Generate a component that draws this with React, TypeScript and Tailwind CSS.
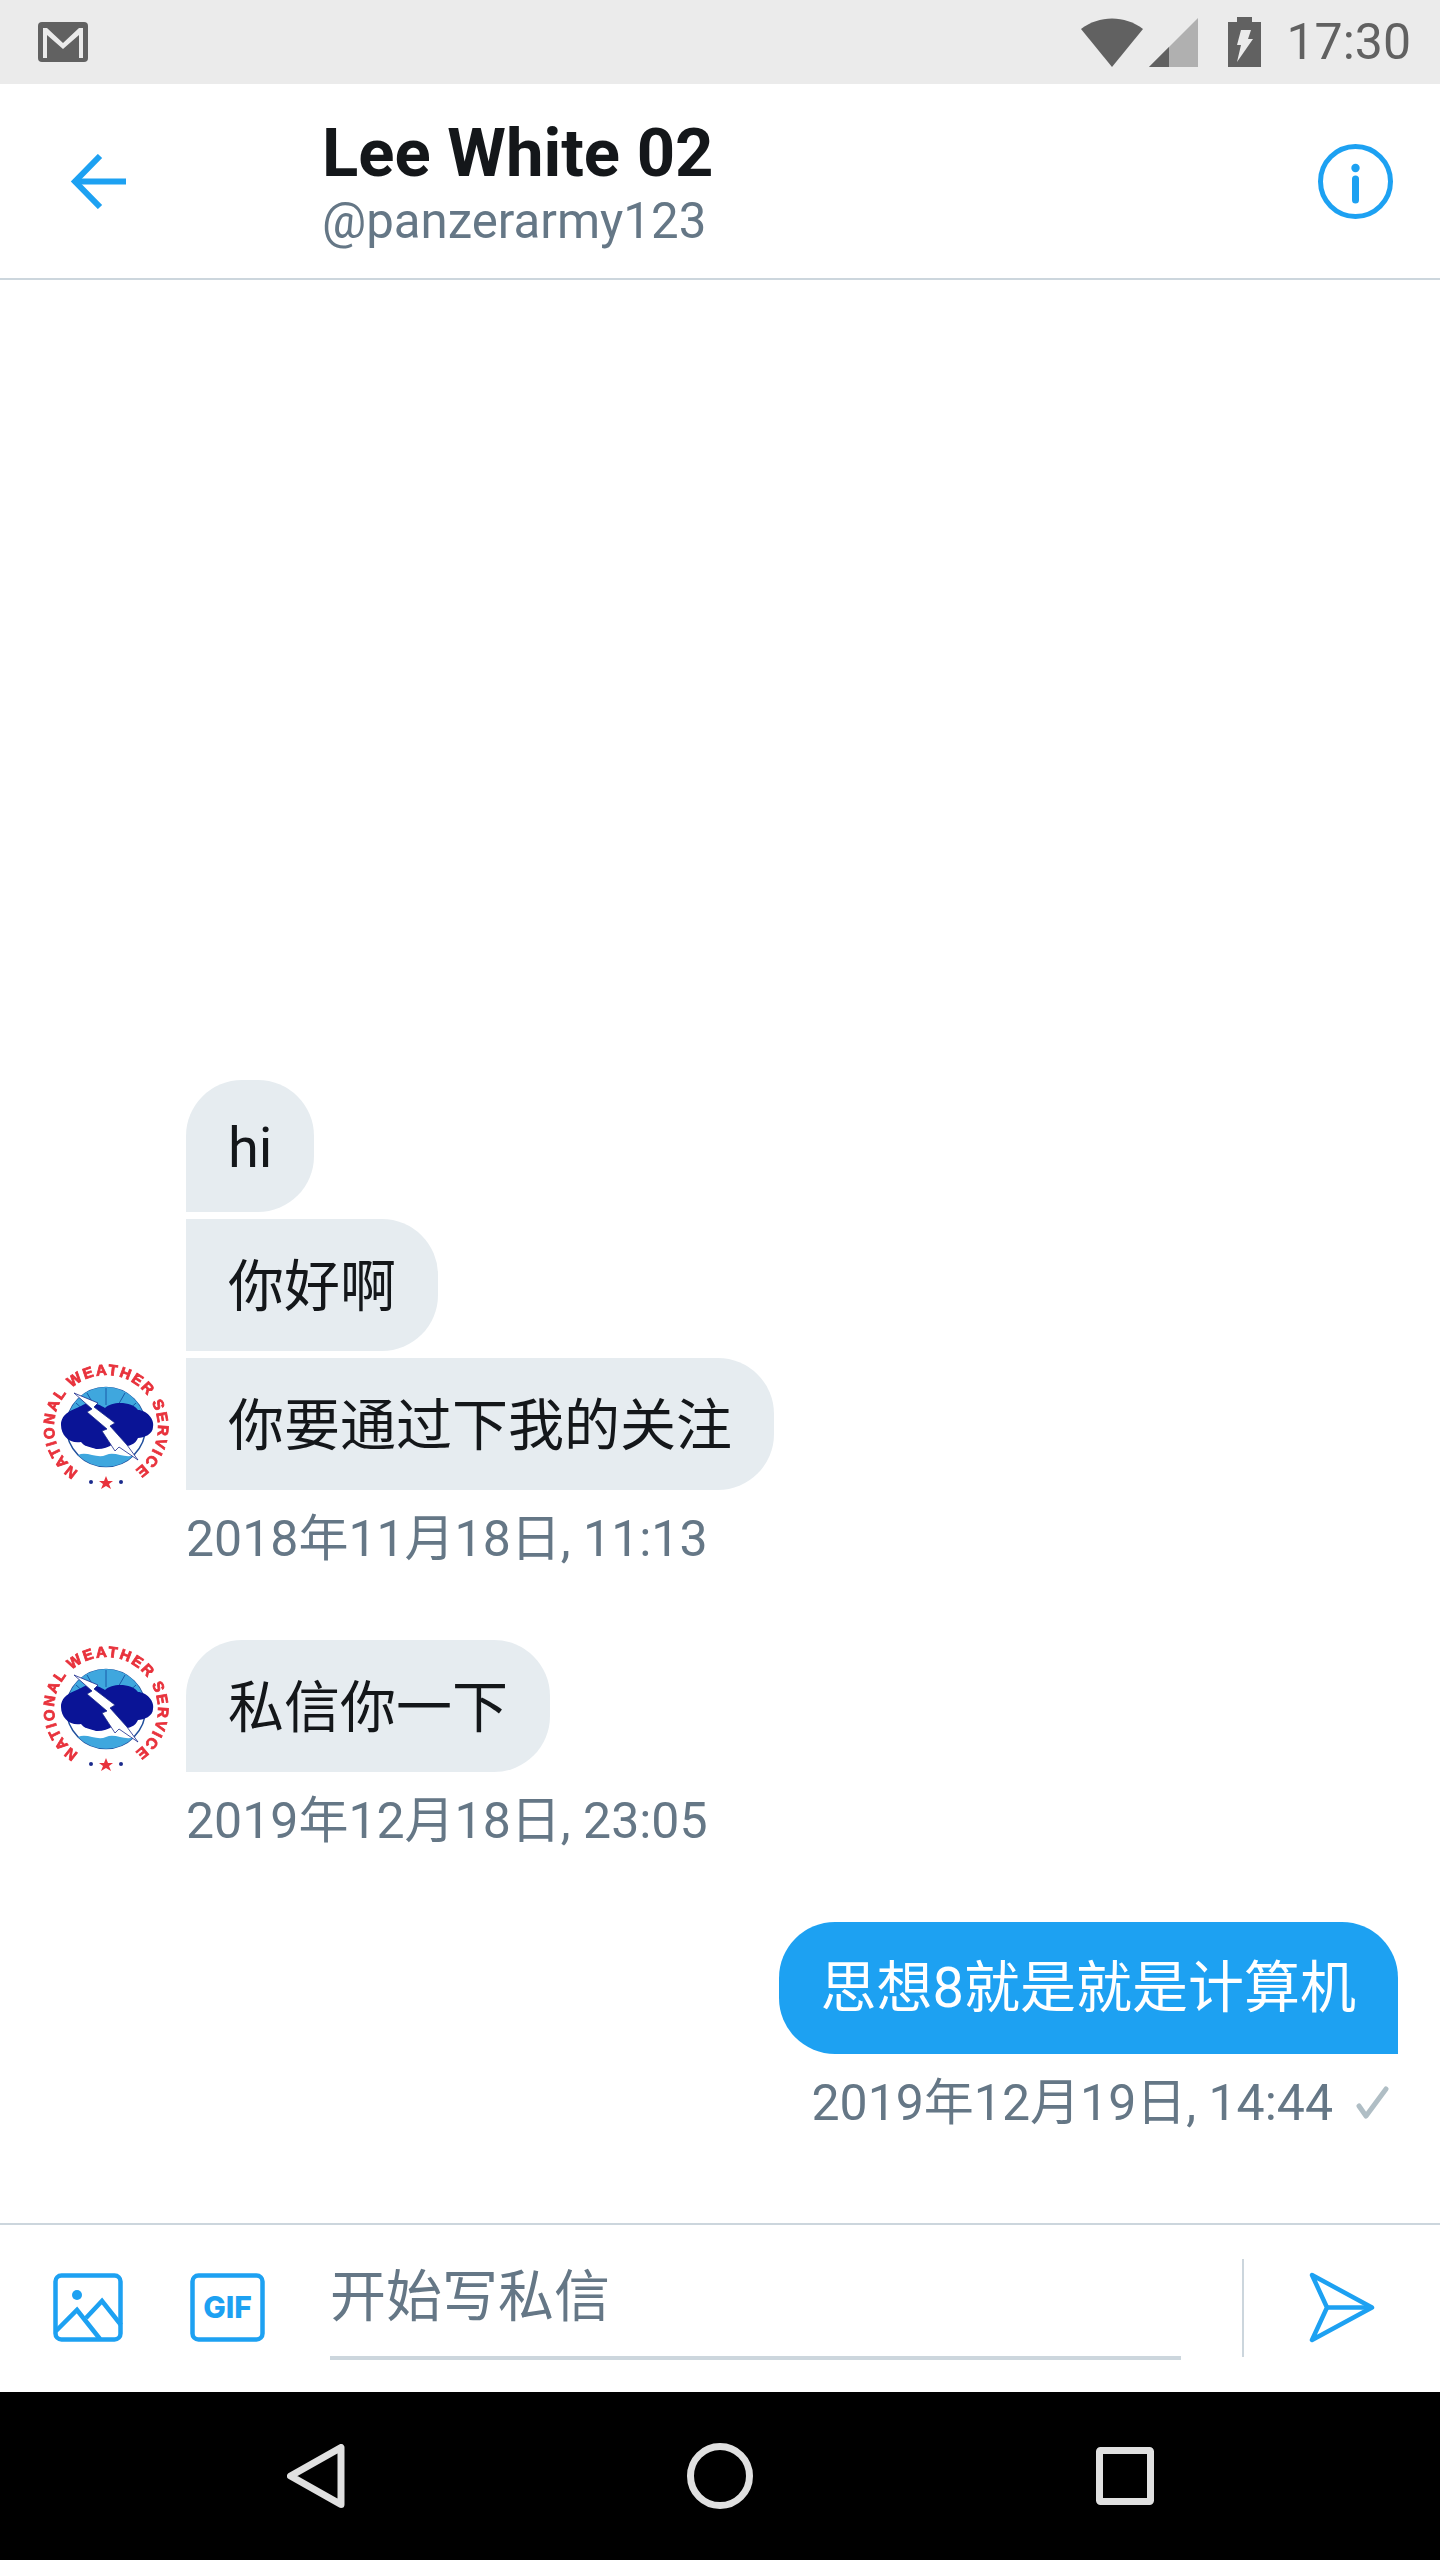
function Avatar() {
  return (
    <svg viewBox="0 0 126 126" className="h-[126px] w-[126px] shrink-0 overflow-visible blur-[0.6px]">
      <path id="wxArc" d="M35.4 108.1 A52 52 0 1 1 90.6 108.1" fill="none" />
      <text fontFamily="Liberation Sans" fontWeight="700" fontSize="15" fill="#e8323c" stroke="#e8323c" strokeWidth="0.8">
        <textPath href="#wxArc" textLength="266" lengthAdjust="spacing">NATIONAL WEATHER SERVICE</textPath>
      </text>
      <circle cx="63" cy="64" r="39.5" fill="#ffffff" stroke="#1f4e9c" strokeWidth="1.5" />
      <path d="M27 48 A39 39 0 0 1 99 48 L90 58 H36 Z" fill="#3fa7de" />
      <path d="M63 25 V42 M44 30 L52 44 M82 30 L74 44 M33 40 L44 50 M93 40 L82 50" stroke="#1a5aa8" strokeWidth="1" />
      <path d="M18 62 C18 50 30 47 38 43 C46 37 56 41 62 45 C70 37 90 39 95 47 C103 47 112 56 110 64 C110 71 101 75 95 75 C91 85 76 85 70 81 C60 89 44 87 38 79 C27 81 18 73 18 62 Z" fill="#0a1496" />
      <path d="M32 84 C42 78 52 90 63 86 C74 82 84 90 94 84 A39 39 0 0 1 32 84 Z" fill="#ffffff" />
      <path d="M35 92 C44 88 54 96 63 92 C72 88 82 96 91 92 A39 39 0 0 1 35 92 Z" fill="#3fa7de" />
      <path d="M31 30 L55 40 L51 44 L72 60 L67 63 L84 82 L95 97 L76 84 L72 88 L59 68 L64 66 L44 49 L49 46 Z" fill="#ffffff" stroke="#1a2a8c" strokeWidth="0.8" />
      <circle cx="48" cy="119" r="2" fill="#1a2a8c" />
      <path d="M63 113 L65 118 L70 118 L66 121 L68 126 L63 123 L58 126 L60 121 L56 118 L61 118 Z" fill="#e8323c" />
      <circle cx="78" cy="119" r="2" fill="#1a2a8c" />
    </svg>
  );
}

function Timestamp({ children }: { children: React.ReactNode }) {
  return <span className="text-[50px] leading-[64px] text-[#657786]">{children}</span>;
}

function Bubble({ children, shape }: { children: React.ReactNode; shape: string }) {
  return (
    <div className={`bg-[#e6ecf0] px-[42px] pb-[30px] pt-[34px] text-[56px] leading-[68px] text-[#14171a] ${shape}`}>
      {children}
    </div>
  );
}

export default function App() {
  return (
    <div className="flex h-[2560px] w-[1440px] flex-col overflow-hidden bg-white font-[Roboto,'Noto_Sans_CJK_SC',sans-serif]">
      {/* status bar */}
      <div className="flex h-[84px] shrink-0 items-center bg-[#ebebeb]">
        <svg viewBox="0 0 50 40" className="ml-[38px] h-[40px] w-[50px]">
          <rect width="50" height="40" rx="4" fill="#616161" />
          <path d="M5 36 V6 H9 L25 21 L41 6 H45 V36 H41 V13 L25 27 L9 13 V36 Z" fill="#ebebeb" />
        </svg>
        <svg viewBox="0 0 62 49" className="ml-auto h-[49px] w-[62px]">
          <path d="M31 49 L0 11 C18 -3 44 -3 62 11 Z" fill="#616161" />
        </svg>
        <svg viewBox="0 0 49 49" className="ml-[6px] h-[49px] w-[49px]">
          <path d="M49 0 V49 H0 Z" fill="#b0b0b0" />
          <path d="M20 29 V49 H0 Z" fill="#616161" />
        </svg>
        <svg viewBox="0 0 33 50" className="ml-[30px] h-[50px] w-[33px]">
          <path d="M9 0 H24 V5 H33 V50 H0 V5 H9 Z" fill="#616161" />
          <path d="M13 13 H23 L20 22 H25 L9 45 L13 28 H9 Z" fill="#ebebeb" />
        </svg>
        <span className="ml-[25px] mr-[29px] text-[50px] leading-none text-[#616161]">17:30</span>
      </div>

      {/* header */}
      <div className="flex h-[196px] shrink-0 items-center border-b-2 border-[#ccd6dd]">
        <svg viewBox="0 0 56 55" className="ml-[70px] h-[55px] w-[56px]" fill="none" stroke="#1da1f2" strokeWidth="6">
          <path d="M30 2 L5 27.5 L30 53" strokeLinejoin="miter" />
          <path d="M5 27.5 H56" />
        </svg>
        <div className="ml-[196px] flex flex-col pt-[2px]">
          <span className="text-[67px] font-bold leading-[76px] text-[#14171a]">Lee White 02</span>
          <span className="mt-[2px] text-[49.2px] leading-[56px] text-[#657786]">@panzerarmy123</span>
        </div>
        <svg viewBox="0 0 75 75" className="ml-auto mr-[47px] h-[75px] w-[75px]" fill="none">
          <circle cx="37.5" cy="37.5" r="35" stroke="#1da1f2" strokeWidth="5" />
          <circle cx="37.5" cy="24" r="4.2" fill="#1da1f2" />
          <path d="M37.5 35 V56" stroke="#1da1f2" strokeWidth="7" strokeLinecap="round" />
        </svg>
      </div>

      {/* messages */}
      <div className="flex min-h-0 flex-1 flex-col justify-end pb-[88px]">
        <div className="flex flex-col items-start gap-[7px] pl-[186px]">
          <Bubble shape="rounded-t-[56px] rounded-br-[56px]">hi</Bubble>
          <Bubble shape="rounded-r-[56px]">你好啊</Bubble>
        </div>
        <div className="mt-[7px] flex items-end">
          <div className="mb-[1px] ml-[43px] mr-[17px]">
            <Avatar />
          </div>
          <Bubble shape="rounded-r-[56px]">你要通过下我的关注</Bubble>
        </div>
        <div className="mt-[17px] pl-[186px]">
          <Timestamp>2018年11月18日, 11:13</Timestamp>
        </div>

        <div className="mt-[69px] flex items-end">
          <div className="mb-[1px] ml-[43px] mr-[17px]">
            <Avatar />
          </div>
          <Bubble shape="rounded-t-[56px] rounded-br-[56px]">私信你一下</Bubble>
        </div>
        <div className="mt-[17px] pl-[186px]">
          <Timestamp>2019年12月18日, 23:05</Timestamp>
        </div>

        <div className="mt-[69px] flex justify-end pr-[42px]">
          <div className="rounded-t-[56px] rounded-bl-[56px] bg-[#1da1f2] px-[42px] py-[32px] text-[56px] leading-[68px] text-white">
            思想8就是就是计算机
          </div>
        </div>
        <div className="mt-[17px] flex items-center justify-end pr-[50px]">
          <Timestamp>2019年12月19日, 14:44</Timestamp>
          <svg viewBox="0 0 34 34" className="ml-[23px] h-[34px] w-[34px]" fill="none" stroke="#b0bec5" strokeWidth="5" strokeLinecap="round" strokeLinejoin="round">
            <path d="M3 20 L10 30 L30 3" />
          </svg>
        </div>
      </div>

      {/* composer */}
      <div className="flex h-[169px] shrink-0 items-start border-t-2 border-[#ccd6dd]">
        <svg viewBox="0 0 70 69" className="ml-[53px] mt-[48px] h-[69px] w-[70px]" fill="none" stroke="#1da1f2" strokeWidth="4.5">
          <rect x="2.5" y="2.5" width="65" height="64" rx="6" />
          <circle cx="24" cy="22" r="5" fill="#1da1f2" stroke="none" />
          <path d="M3 58 L24 37 L47 66" />
          <path d="M33 45 L49 28 L68 52" />
        </svg>
        <svg viewBox="0 0 75 69" className="ml-[67px] mt-[48px] h-[69px] w-[75px]" fill="none">
          <rect x="2.5" y="2.5" width="70" height="64" rx="6" stroke="#1da1f2" strokeWidth="4.5" />
          <text x="37.5" y="45" textAnchor="middle" fontFamily="Inter" fontWeight="800" fontSize="30" fill="#1da1f2">GIF</text>
        </svg>
        <div className="ml-[65px] mt-[38px] w-[851px] border-b-4 border-[#ccd6dd] pb-[25px] text-[56px] leading-[68px] text-[#657786]">
          开始写私信
        </div>
        <div className="ml-[61px] mt-[34px] h-[98px] w-[2px] bg-[#ccd6dd]" />
        <svg viewBox="0 0 66 71" className="ml-[65px] mt-[47px] h-[71px] w-[66px]" fill="none" stroke="#1da1f2" strokeWidth="4.5" strokeLinejoin="round">
          <path d="M63 35.5 L3 3 L18 35.5 L3 68 Z" />
          <path d="M18 35.5 H63" />
        </svg>
      </div>

      {/* android nav */}
      <div className="relative flex h-[168px] shrink-0 items-center bg-black">
        <svg viewBox="0 0 58 64" className="ml-[287px] h-[64px] w-[58px]" fill="none" stroke="#e0e0e0" strokeWidth="7" strokeLinejoin="round">
          <path d="M54 3.5 V60.5 L3.5 32 Z" />
        </svg>
        <svg viewBox="0 0 66 66" className="ml-[342px] h-[66px] w-[66px]" fill="none" stroke="#e0e0e0" strokeWidth="7">
          <circle cx="33" cy="33" r="29.5" />
        </svg>
        <svg viewBox="0 0 58 58" className="ml-[343px] h-[58px] w-[58px]" fill="none" stroke="#e0e0e0" strokeWidth="7" strokeLinejoin="round">
          <rect x="3.5" y="3.5" width="51" height="51" rx="1" />
        </svg>
      </div>
    </div>
  );
}
